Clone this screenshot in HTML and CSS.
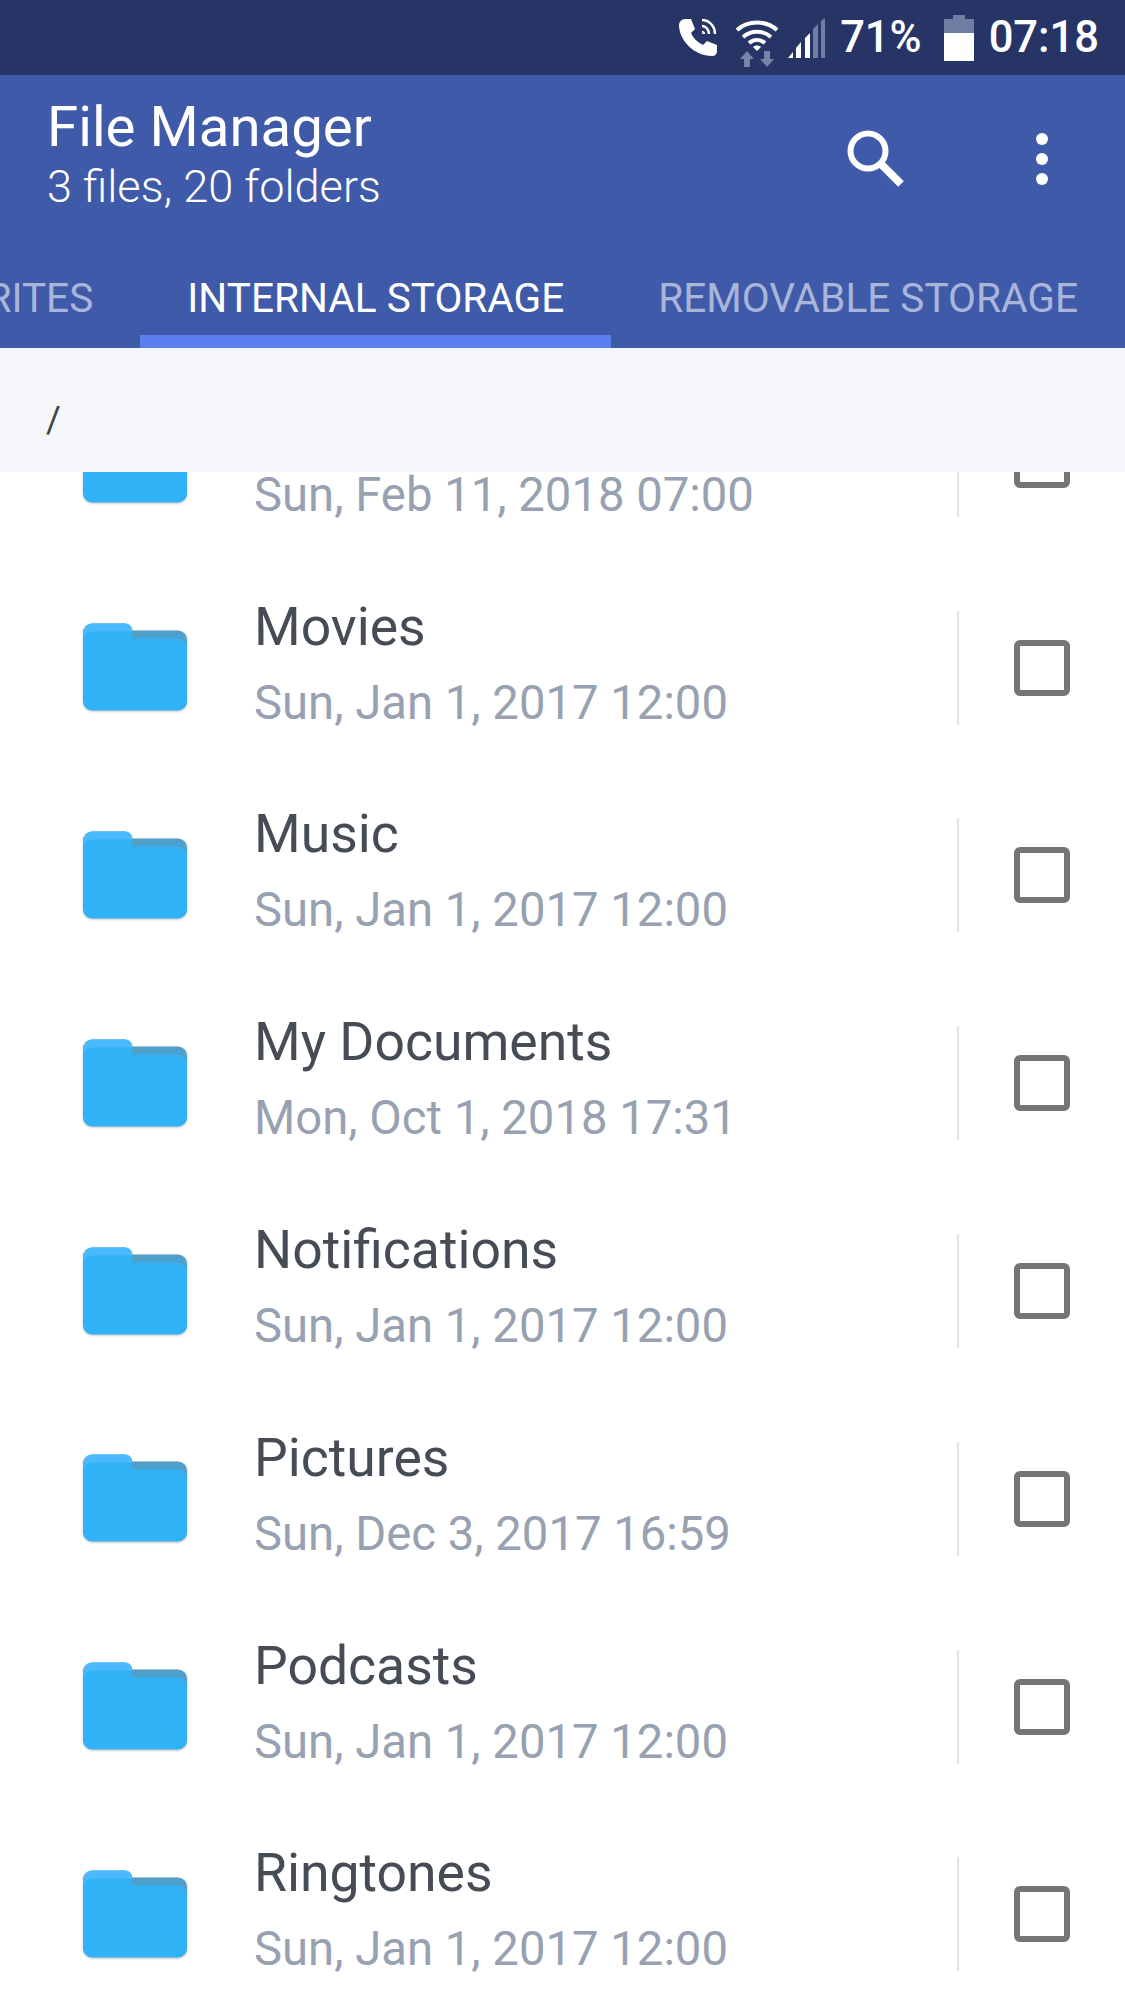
FILE: index.html
```html
<!DOCTYPE html>
<html lang="en">
  <head>
    <meta charset="UTF-8" />
    <meta name="viewport" content="width=device-width, initial-scale=1.0" />
    <title>File Manager</title>
    <link rel="stylesheet" href="styles.css">
  </head>
  <body>
    <svg class="defs" width="0" height="0">
      <symbol id="folder" viewBox="0 0 106 90">
        <path d="M50 8h46a9 9 0 0 1 9 9v20H50z" fill="#4f9fcb" />
        <path d="M1 10a9 9 0 0 1 9-9h33a7 7 0 0 1 7 7v8h46a9 9 0 0 1 9 9v54a9 9 0 0 1-9 9H10a9 9 0 0 1-9-9z" fill="#31b2f6" />
        <path d="M1 10a9 9 0 0 1 9-9h33a7 7 0 0 1 7 7v1H10a9 9 0 0 0-9 9z" fill="#4abafa" />
      </symbol>
    </svg>

    <header class="appbar">
      <div class="status">
        <svg class="ic-call" width="40" height="40" viewBox="0 0 40 40">
          <path d="M7 1l6 0 4 10-4 4c2 5 6 9 12 12l4-4 10 4 0 6c0 3-2 5-5 5C16 38 1 22 1 7c0-3 3-6 6-6z" fill="#fff" />
          <path d="M24 2c7 0 13 6 13 14M24 8c4 0 7 4 7 8M24 14c1 0 2 1 2 2" fill="none" stroke="#fff" stroke-width="2.5" />
        </svg>
        <svg class="ic-wifi" width="44" height="48" viewBox="0 0 44 48">
          <path d="M2 11C13 1 31 1 42 11M8 18c8-7 20-7 28 0M14 24c5-4 11-4 16 0" fill="none" stroke="#fff" stroke-width="4" />
          <path d="M18 28c2-2 6-2 8 0l-4 4z" fill="#fff" />
          <path d="M12 32l7 8h-4v8h-6v-8H5zM29 32h6v8h4l-7 8-7-8h4z" fill="#7884a8" />
        </svg>
        <svg class="ic-signal" width="38" height="40" viewBox="0 0 38 40">
          <path d="M0 40l5-6v6z" fill="#fff" />
          <path d="M8 30l5-6v16H8zM17 20l5-5v25h-5z" fill="#fff" />
          <path d="M25 11l5-5v34h-5zM33 3l4-3v40h-4z" fill="#6f7da3" />
        </svg>
        <span class="status-text pct">71%</span>
        <svg class="ic-battery" width="30" height="46" viewBox="0 0 30 46">
          <path d="M9 0h12v4h9v14H0V4h9z" fill="#6f7da3" />
          <rect y="18" width="30" height="28" fill="#fff" />
        </svg>
        <span class="status-text">07:18</span>
      </div>

      <div class="toolbar">
        <div class="titles">
          <div class="title">File Manager</div>
          <div class="subtitle">3 files, 20 folders</div>
        </div>
        <div class="actions">
          <svg class="search" width="60" height="60" viewBox="0 0 60 60">
            <circle cx="24" cy="24" r="17.5" fill="none" stroke="#fff" stroke-width="6" />
            <path d="M36 36l21 21" fill="none" stroke="#fff" stroke-width="8" />
          </svg>
          <svg class="more" width="12" height="52" viewBox="0 0 12 52">
            <circle cx="6" cy="6" r="6" fill="#fff" />
            <circle cx="6" cy="26" r="6" fill="#fff" />
            <circle cx="6" cy="46" r="6" fill="#fff" />
          </svg>
        </div>
      </div>

      <nav class="tabs">
        <div class="tab">FAVORITES</div>
        <div class="tab active">INTERNAL STORAGE</div>
        <div class="tab">REMOVABLE STORAGE</div>
      </nav>
    </header>

    <div class="path">/</div>

    <main class="viewport">
      <ul class="list">
        <li class="row">
          <svg class="folder"><use href="#folder" /></svg>
          <div class="info"><div class="name">&nbsp;</div><div class="date">Sun, Feb 11, 2018 07:00</div></div>
          <div class="check"><span class="box"></span></div>
        </li>
        <li class="row">
          <svg class="folder"><use href="#folder" /></svg>
          <div class="info"><div class="name">Movies</div><div class="date">Sun, Jan 1, 2017 12:00</div></div>
          <div class="check"><span class="box"></span></div>
        </li>
        <li class="row">
          <svg class="folder"><use href="#folder" /></svg>
          <div class="info"><div class="name">Music</div><div class="date">Sun, Jan 1, 2017 12:00</div></div>
          <div class="check"><span class="box"></span></div>
        </li>
        <li class="row">
          <svg class="folder"><use href="#folder" /></svg>
          <div class="info"><div class="name">My Documents</div><div class="date">Mon, Oct 1, 2018 17:31</div></div>
          <div class="check"><span class="box"></span></div>
        </li>
        <li class="row">
          <svg class="folder"><use href="#folder" /></svg>
          <div class="info"><div class="name">Notifications</div><div class="date">Sun, Jan 1, 2017 12:00</div></div>
          <div class="check"><span class="box"></span></div>
        </li>
        <li class="row">
          <svg class="folder"><use href="#folder" /></svg>
          <div class="info"><div class="name">Pictures</div><div class="date">Sun, Dec 3, 2017 16:59</div></div>
          <div class="check"><span class="box"></span></div>
        </li>
        <li class="row">
          <svg class="folder"><use href="#folder" /></svg>
          <div class="info"><div class="name">Podcasts</div><div class="date">Sun, Jan 1, 2017 12:00</div></div>
          <div class="check"><span class="box"></span></div>
        </li>
        <li class="row">
          <svg class="folder"><use href="#folder" /></svg>
          <div class="info"><div class="name">Ringtones</div><div class="date">Sun, Jan 1, 2017 12:00</div></div>
          <div class="check"><span class="box"></span></div>
        </li>
      </ul>
    </main>
  </body>
</html>
```

FILE: styles.css
```css
html,
body {
  margin: 0;
  height: 2000px;
  overflow: hidden;
}

body {
  font-family: Roboto, "Liberation Sans", sans-serif;
  background-color: #fff;
  display: flex;
  flex-direction: column;
}

.defs {
  position: absolute;
}

.appbar {
  background-color: #3f5aa9;
  color: #fff;
  height: 273px;
  padding-top: 75px;
  position: relative;
  flex-shrink: 0;
}

.status {
  position: absolute;
  top: 0;
  left: 0;
  right: 0;
  height: 75px;
  box-sizing: border-box;
  background-color: #263466;
  display: flex;
  justify-content: flex-end;
  align-items: center;
  padding-right: 26px;
}

.status-text {
  font-size: 43.5px;
  font-weight: 500;
}

.ic-call {
  margin-right: 17px;
}

.ic-wifi {
  margin-right: 9px;
  margin-top: 10px;
}

.ic-signal {
  margin-right: 14px;
}

.pct {
  margin-right: 22px;
}

.ic-battery {
  margin-right: 15px;
}

.toolbar {
  height: 192px;
  padding-left: 47px;
  display: flex;
  justify-content: space-between;
}

.titles {
  padding-top: 20px;
}

.title {
  font-size: 56.4px;
  line-height: 64px;
}

.subtitle {
  font-size: 45.1px;
  font-weight: 300;
  line-height: 56px;
}

.actions {
  display: flex;
  align-items: flex-start;
  gap: 132px;
  padding: 52px 77px 0 0;
}

.more {
  margin-top: 6px;
}

.tabs {
  display: flex;
  justify-content: flex-end;
  height: 81px;
}

.tab {
  flex-shrink: 0;
  padding: 0 47px;
  font-size: 40.6px;
  line-height: 62px;
  color: #aab6d9;
}

.tab.active {
  color: #fff;
  border-bottom: 13px solid #5b7fef;
  height: 68px;
}

.path {
  height: 124px;
  box-sizing: border-box;
  background-color: #f5f6fa;
  padding: 50px 0 0 46px;
  font-size: 36px;
  line-height: 44px;
  color: #444;
  flex-shrink: 0;
}

.viewport {
  flex: 1;
  overflow: hidden;
}

.list {
  list-style: none;
  margin: -116px 0 0;
  padding: 0;
}

.row {
  height: 207.8px;
  display: flex;
  align-items: center;
}

.folder {
  width: 106px;
  height: 91px;
  margin-left: 82px;
  flex-shrink: 0;
  filter: drop-shadow(0 1px 1px rgba(0, 0, 0, 0.25));
}

.info {
  flex: 1;
  margin-left: 66px;
  padding-bottom: 8px;
}

.name {
  font-size: 53.5px;
  line-height: 60px;
  color: #454c56;
}

.date {
  font-size: 47.25px;
  line-height: 56px;
  margin-top: 18px;
  color: #98a1b2;
}

.check {
  height: 114px;
  width: 168px;
  border-left: 2px solid #e4e4e4;
  display: flex;
  align-items: center;
  padding-left: 55px;
  box-sizing: border-box;
}

.box {
  width: 56px;
  height: 56px;
  box-sizing: border-box;
  border: 6px solid #757575;
  border-radius: 6px;
}
```
